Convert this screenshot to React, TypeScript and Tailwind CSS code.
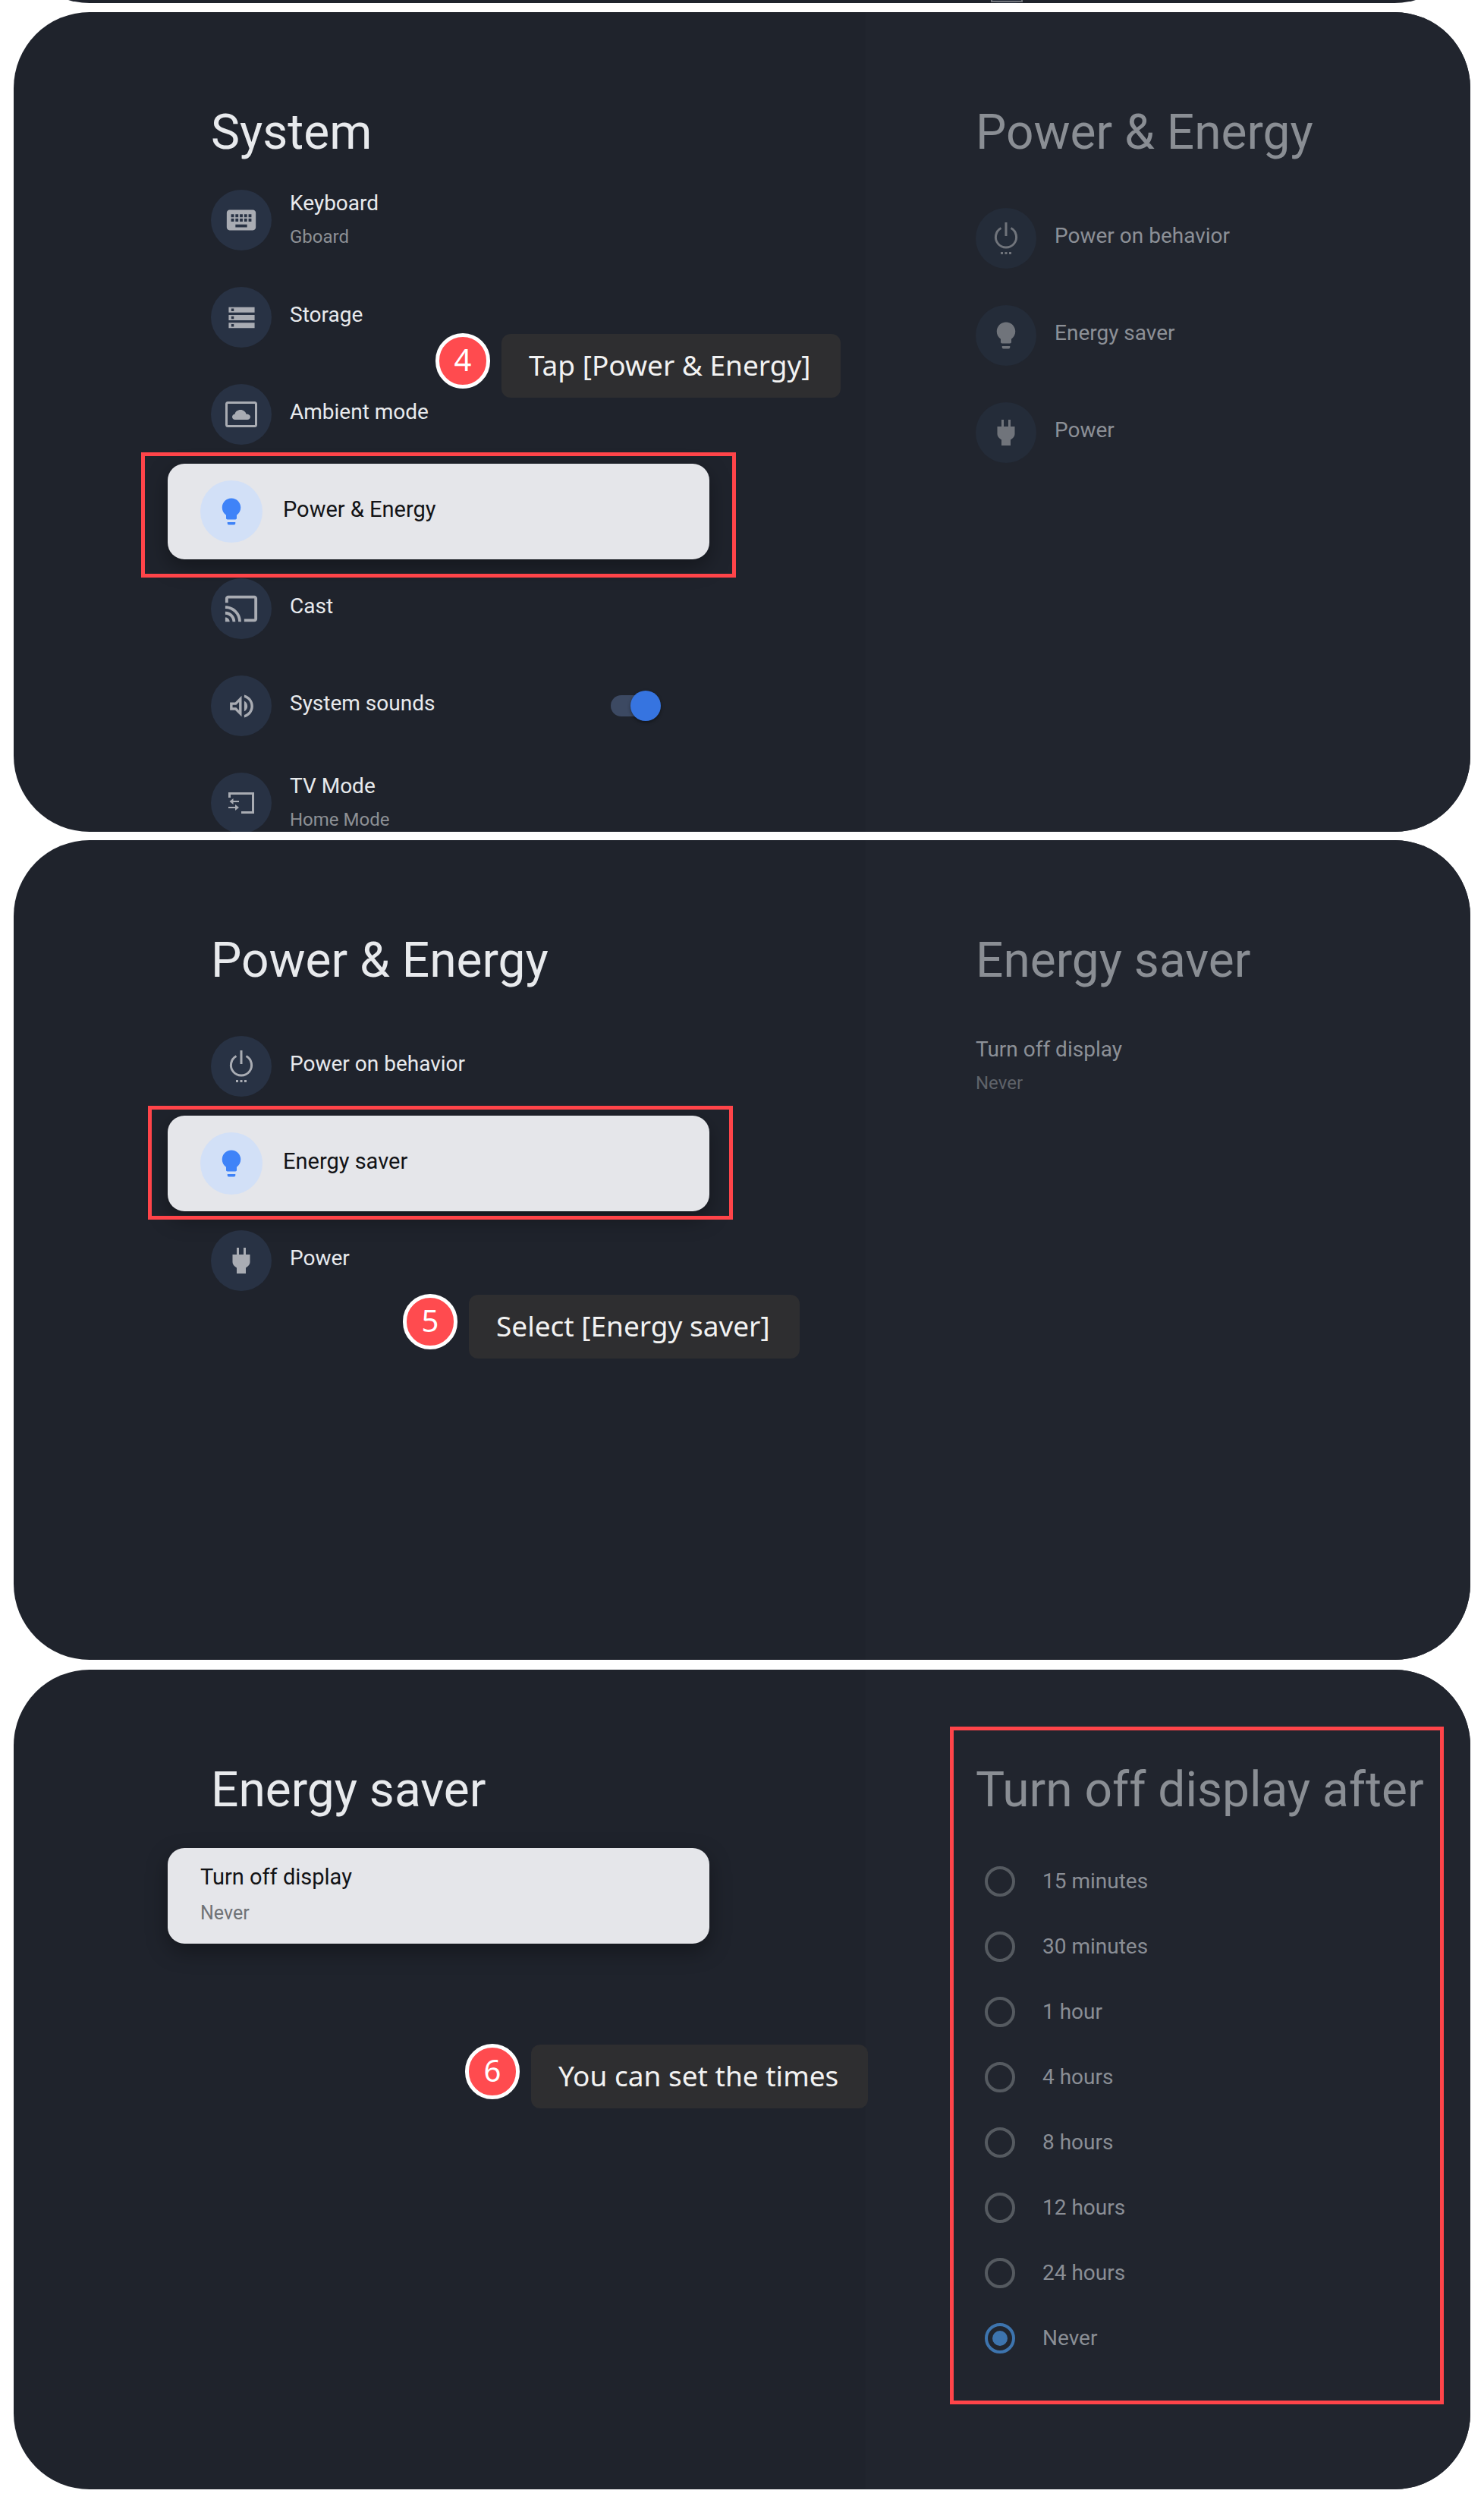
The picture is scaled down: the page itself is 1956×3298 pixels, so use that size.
import type { ReactNode } from 'react'

function IconSvg({ size, children, box = '0 0 24 24' }: { size: number; children: ReactNode; box?: string }) {
    return (
        <svg viewBox={box} width={size} height={size} fill="currentColor" aria-hidden="true">
            {children}
        </svg>
    )
}

const KeyboardIcon = () => (
    <IconSvg size={46}>
        <path d="M20 5H4c-1.1 0-1.99.9-1.99 2L2 17c0 1.1.9 2 2 2h16c1.1 0 2-.9 2-2V7c0-1.1-.9-2-2-2zm-9 3h2v2h-2V8zm0 3h2v2h-2v-2zM8 8h2v2H8V8zm0 3h2v2H8v-2zm-1 2H5v-2h2v2zm0-3H5V8h2v2zm9 7H8v-2h8v2zm0-4h-2v-2h2v2zm0-3h-2V8h2v2zm3 3h-2v-2h2v2zm0-3h-2V8h2v2z" />
    </IconSvg>
)

const StorageIcon = () => (
    <IconSvg size={41}>
        <path d="M2 20h20v-4H2v4zm2-3h2v2H4v-2zM2 4v4h20V4H2zm4 3H4V5h2v2zm-4 7h20v-4H2v4zm2-3h2v2H4v-2z" />
    </IconSvg>
)

const AmbientIcon = () => (
    <IconSvg size={44} box="0 0 44 44">
        <rect x="2.5" y="6.5" width="39" height="31" rx="2" fill="none" stroke="currentColor" strokeWidth="3" />
        <path d="M14 29c-2.800 0-4-2-4-3.800 0-2 1.600-3.600 3.600-3.800.6-3 3.600-5.400 7.400-5.400 3.800 0 6.800 2.600 7.400 5.400 2.600 0 5.600 1.400 5.600 3.800 0 2.400-2 3.800-4 3.800H14z" />
    </IconSvg>
)

const BulbIcon = () => (
    <IconSvg size={42}>
        <path d="M9 21c0 .55.45 1 1 1h4c.55 0 1-.45 1-1v-1H9v1zm3-19C8.140 2 5 5.140 5 9c0 2.380 1.190 4.470 3 5.740V17c0 .55.45 1 1 1h6c.55 0 1-.45 1-1v-2.260c1.810-1.270 3-3.360 3-5.740 0-3.860-3.140-7-7-7z" />
    </IconSvg>
)

const CastIcon = () => (
    <IconSvg size={46}>
        <path d="M21 3H3c-1.1 0-2 .9-2 2v3h2V5h18v14h-7v2h7c1.1 0 2-.9 2-2V5c0-1.1-.9-2-2-2zM1 18v3h3c0-1.660-1.340-3-3-3zm0-4v2c2.760 0 5 2.240 5 5h2c0-3.870-3.130-7-7-7zm0-4v2c4.970 0 9 4.030 9 9h2c0-6.080-4.930-11-11-11z" />
    </IconSvg>
)

const SoundIcon = () => (
    <IconSvg size={41}>
        <path d="M3 9v6h4l5 5V4L7 9H3zm7-.17v6.340L7.830 13H5v-2h2.830L10 8.830zM16.500 12c0-1.770-1.020-3.290-2.500-4.030v8.050c1.480-.73 2.500-2.250 2.500-4.020zM14 3.230v2.060c2.890.86 5 3.540 5 6.710s-2.110 5.850-5 6.710v2.060c4.010-.91 7-4.490 7-8.770 0-4.280-2.990-7.860-7-8.770z" />
    </IconSvg>
)

const TvModeIcon = () => (
    <IconSvg size={36} box="0 0 36 36">
        <path d="M2.500 11V5.500h31v25H18" fill="none" stroke="currentColor" strokeWidth="3" />
        <path d="M15 15H7.500v-3L2.500 16l5 4v-3H15zM1 23h9v-3l5 4-5 4v-3H1z" />
    </IconSvg>
)

const PowerIcon = () => (
    <IconSvg size={44} box="0 0 44 44">
        <path d="M22 1v18" fill="none" stroke="currentColor" strokeWidth="3" />
        <path d="M15.500 8.500a13.600 13.600 0 1 0 13 0" fill="none" stroke="currentColor" strokeWidth="3" />
        <path d="M15 40h3v3h-3zM20.500 40h3v3h-3zM26 40h3v3h-3z" />
    </IconSvg>
)

const PlugIcon = () => (
    <IconSvg size={36} box="0 0 36 36">
        <path d="M12 1h3v9h6V1h3v9h5.500v10c0 3-2 5-5.500 7.500V35H12v-7.500C8.500 25 6.500 23 6.500 20V10H12z" />
    </IconSvg>
)

type RowData = {
    icon: ReactNode
    label: string
    sub?: string
    toggle?: boolean
}

function Row({ icon, label, sub, toggle }: RowData) {
    return (
        <div className="flex h-[128px] items-center pl-[57px]">
            <div className="flex h-[80px] w-[80px] shrink-0 items-center justify-center rounded-full bg-[#283244] text-[#a9acb3]">
                {icon}
            </div>
            {sub ? (
                <div className="ml-[24px] flex flex-col pb-[2px]">
                    <span className="text-[28px] leading-[36px] text-[#e8eaed]">{label}</span>
                    <span className="mt-[10px] text-[24px] leading-[32px] text-[#8d9095]">{sub}</span>
                </div>
            ) : (
                <span className="ml-[24px] pb-[6px] text-[28px] leading-[36px] text-[#e8eaed]">{label}</span>
            )}
            {toggle && (
                <div className="relative ml-auto mr-[89px] h-[28px] w-[62px] rounded-full bg-[#3c4962]">
                    <div className="absolute right-[-4px] top-[-6px] h-[40px] w-[40px] rounded-full bg-[#3674e0] shadow-[0_2px_4px_rgba(0,0,0,0.4)]" />
                </div>
            )}
        </div>
    )
}

function FocusedRow({ icon, label, sub }: { icon?: ReactNode; label: string; sub?: string }) {
    return (
        <div className="flex h-[128px] items-center">
            <div className="flex h-[126px] w-[714px] items-center rounded-[22px] bg-[#e5e6ea] pl-[43px] shadow-[0_10px_28px_rgba(0,0,0,0.35)]">
                {icon && (
                    <div className="mr-[27px] flex h-[82px] w-[82px] items-center justify-center rounded-full bg-[#d2e0f7] text-[#3f83f8]">
                        {icon}
                    </div>
                )}
                <div className={sub ? 'flex flex-col pb-[4px]' : 'flex flex-col pb-[7px]'}>
                    <span className="text-[29px] leading-[36px] text-[#121316]">{label}</span>
                    {sub && <span className="mt-[14px] text-[25px] leading-[32px] text-[#6f7276]">{sub}</span>}
                </div>
            </div>
        </div>
    )
}

function DimRow({ icon, label }: { icon: ReactNode; label: string }) {
    return (
        <div className="flex h-[128px] items-center">
            <div className="flex h-[80px] w-[80px] items-center justify-center rounded-full bg-[#242c39] text-[#70747b]">
                {icon}
            </div>
            <span className="ml-[24px] pb-[6px] text-[28px] leading-[36px] text-[#8c9097]">{label}</span>
        </div>
    )
}

function Title({ children, dim }: { children: ReactNode; dim?: boolean }) {
    return (
        <h2 className={dim ? 'text-[64px] leading-[72px] font-normal whitespace-nowrap text-[#8a8e94]' : 'text-[64px] leading-[72px] font-normal whitespace-nowrap text-[#e8eaed]'}>
            {children}
        </h2>
    )
}

function Callout({ n, text, className }: { n: number; text: string; className: string }) {
    return (
        <div className={`absolute flex items-start gap-[15px] [font-family:'Noto_Sans',sans-serif] ${className}`}>
            <div className="flex h-[73px] w-[72px] items-center justify-center rounded-full border-[5px] border-white bg-[#ff4b4f] pb-[4px] text-[40px] leading-none text-white">
                {n}
            </div>
            <div className="mt-[1px] flex h-[84px] items-center rounded-[12px] bg-[#2e2e30] pb-[2px] pl-[36px] pr-[39px] text-[37px] whitespace-nowrap text-[#f2f2f2]">
                {text}
            </div>
        </div>
    )
}

function RedBox({ className }: { className: string }) {
    return <div className={`absolute border-[5px] border-[#ff4449] ${className}`} />
}

function Panel({ className, children }: { className: string; children: ReactNode }) {
    return (
        <section className={`relative mx-[18px] flex h-[1080px] overflow-hidden rounded-[100px] bg-[#1f232c] ${className}`}>
            {children}
        </section>
    )
}

function LeftPane({ children }: { children: ReactNode }) {
    return <div className="w-[1123px] shrink-0 pl-[203px] pr-[185px] pt-[123px]">{children}</div>
}

function RightPane({ children }: { children: ReactNode }) {
    return <div className="flex-1 bg-[#21252e] pl-[145px] pt-[123px]">{children}</div>
}

const radioOptions = ['15 minutes', '30 minutes', '1 hour', '4 hours', '8 hours', '12 hours', '24 hours', 'Never']

export default function App() {
    return (
        <div className="h-[3298px] w-[1956px] overflow-hidden bg-white [font-family:Roboto,sans-serif]">
            {/* sliver of the previous step, cut off by the top of the picture */}
            <Panel className="mt-[-1076px] items-end">
                <div className="mb-[-2px] ml-[1269px] flex h-[80px] w-[80px] items-end justify-center rounded-full bg-[#242c39]">
                    <div className="mb-[3px] h-[6px] w-[42px] border-2 border-[#70747b]" />
                </div>
            </Panel>

            <Panel className="mt-[12px]">
                <LeftPane>
                    <div className="pl-[57px]"><Title>System</Title></div>
                    <div className="mt-[15px]">
                        <Row icon={<KeyboardIcon />} label="Keyboard" sub="Gboard" />
                        <Row icon={<StorageIcon />} label="Storage" />
                        <Row icon={<AmbientIcon />} label="Ambient mode" />
                        <FocusedRow icon={<BulbIcon />} label="Power & Energy" />
                        <Row icon={<CastIcon />} label="Cast" />
                        <Row icon={<SoundIcon />} label="System sounds" toggle />
                        <Row icon={<TvModeIcon />} label="TV Mode" sub="Home Mode" />
                    </div>
                </LeftPane>
                <RightPane>
                    <Title dim>Power &amp; Energy</Title>
                    <div className="mt-[39px]">
                        <DimRow icon={<PowerIcon />} label="Power on behavior" />
                        <DimRow icon={<BulbIcon />} label="Energy saver" />
                        <DimRow icon={<PlugIcon />} label="Power" />
                    </div>
                </RightPane>
                <RedBox className="left-[168px] top-[580px] h-[165px] w-[784px]" />
                <Callout n={4} text="Tap [Power & Energy]" className="left-[556px] top-[423px]" />
            </Panel>

            <Panel className="mt-[11px]">
                <LeftPane>
                    <div className="pl-[57px]"><Title>Power &amp; Energy</Title></div>
                    <div className="mt-[39px]">
                        <Row icon={<PowerIcon />} label="Power on behavior" />
                        <FocusedRow icon={<BulbIcon />} label="Energy saver" />
                        <Row icon={<PlugIcon />} label="Power" />
                    </div>
                </LeftPane>
                <RightPane>
                    <Title dim>Energy saver</Title>
                    <div className="mt-[63px] flex flex-col">
                        <span className="text-[28px] leading-[36px] text-[#8c9097]">Turn off display</span>
                        <span className="mt-[10px] text-[24px] leading-[32px] text-[#5f636a]">Never</span>
                    </div>
                </RightPane>
                <RedBox className="left-[177px] top-[350px] h-[150px] w-[771px]" />
                <Callout n={5} text="Select [Energy saver]" className="left-[513px] top-[598px]" />
            </Panel>

            <Panel className="mt-[13px]">
                <LeftPane>
                    <div className="pl-[57px]"><Title>Energy saver</Title></div>
                    <div className="mt-[39px]">
                        <FocusedRow label="Turn off display" sub="Never" />
                    </div>
                </LeftPane>
                <RightPane>
                    <Title dim>Turn off display after</Title>
                    <div className="mt-[41px] flex flex-col pl-[12px]">
                        {radioOptions.map((option) => (
                            <div key={option} className="flex h-[86px] items-center">
                                {option === 'Never' ? (
                                    <div className="flex h-[40px] w-[40px] items-center justify-center rounded-full border-[4px] border-[#3d74ae]">
                                        <div className="h-[20px] w-[20px] rounded-full bg-[#3d74ae]" />
                                    </div>
                                ) : (
                                    <div className="h-[40px] w-[40px] rounded-full border-[4px] border-[#555a60]" />
                                )}
                                <span className="ml-[36px] text-[28px] leading-[36px] text-[#8a8e95]">{option}</span>
                            </div>
                        ))}
                    </div>
                </RightPane>
                <RedBox className="left-[1234px] top-[75px] h-[893px] w-[651px]" />
                <Callout n={6} text="You can set the times" className="left-[595px] top-[493px]" />
            </Panel>
        </div>
    )
}
